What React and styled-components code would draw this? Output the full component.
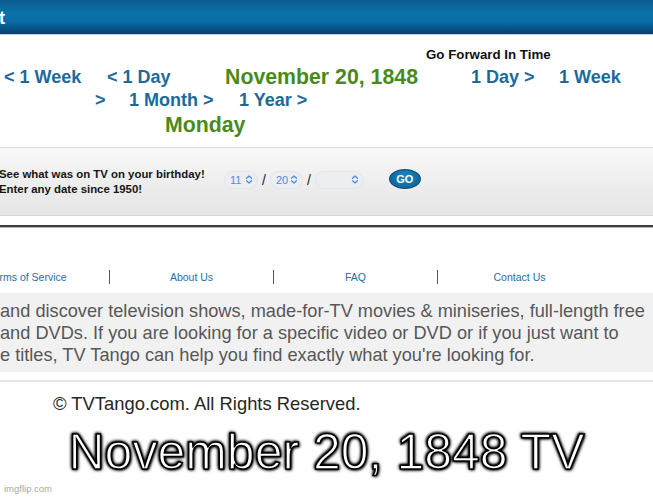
import styled, { createGlobalStyle } from "styled-components";

const GlobalStyle = createGlobalStyle`
  html, body {
    margin: 0;
    padding: 0;
    background: #fff;
    overflow: hidden;
  }
  body {
    font-family: "Liberation Sans", Arial, sans-serif;
  }
`;

const Page = styled.div`
  width: 653px;
  height: 499px;
  overflow: hidden;
  display: flex;
  flex-direction: column;
`;

const Header = styled.div`
  height: 34px;
  border-bottom: 1px solid #c9d3dc;
  background: linear-gradient(
    to bottom,
    #0a5b90 0%,
    #0b73ab 40%,
    #0a6ba3 65%,
    #053f6d 100%
  );
  display: flex;
  align-items: center;
`;

const HeaderTitle = styled.span`
  color: #fff;
  font-weight: bold;
  font-size: 18px;
  margin-left: -1px;
  margin-top: 2px;
`;

const TimeNav = styled.div`
  display: flex;
  flex-direction: column;
  padding-top: 12px;
  padding-bottom: 11px;
  border-bottom: 1px solid #dcdcdc;
`;

const ForwardLabel = styled.div`
  padding-left: 426px;
  font-size: 13.3px;
  line-height: 16px;
  font-weight: bold;
  color: #111;
`;

const NavRow = styled.div`
  display: grid;
  grid-template-columns: ${(p) => p.$cols || "auto"};
  padding-left: ${(p) => p.$pad}px;
  margin-top: ${(p) => p.$top}px;
  line-height: 22px;
  white-space: nowrap;
`;

const NavLink = styled.span`
  font-weight: bold;
  font-size: 18px;
  color: #1c6a9b;
`;

const DateText = styled.span`
  font-weight: bold;
  font-size: 21.3px;
  color: #4a8a1b;
`;

const BirthdayBar = styled.div`
  height: 68px;
  border-bottom: 1px solid #d5d5d5;
  background: linear-gradient(to bottom, #f9f9f9 0%, #ececec 60%, #e5e5e5 100%);
  display: flex;
  align-items: center;
  padding-bottom: 4px;
  box-sizing: border-box;
`;

const Prompt = styled.div`
  margin-left: -1px;
  margin-top: 4px;
  width: 225px;
  font-size: 11.4px;
  line-height: 15px;
  font-weight: bold;
  color: #151515;
`;

const DateFields = styled.div`
  display: flex;
  align-items: center;
  gap: 4px;
`;

const Pill = styled.div`
  width: ${(p) => p.$w}px;
  height: 18px;
  box-sizing: border-box;
  border-radius: 9px;
  background: #eceef2;
  border: 1px solid #e2e5ea;
  display: flex;
  align-items: center;
  justify-content: space-between;
  padding: 0 4px 0 5px;
  font-size: 11px;
  color: #4a8ed9;
`;

const Slash = styled.span`
  font-size: 14px;
  color: #222;
`;

const GoButton = styled.button`
  margin-left: 25px;
  width: 32px;
  height: 20px;
  border-radius: 50%;
  border: 1px solid #0a4e78;
  background: radial-gradient(ellipse at 50% 35%, #1a86c0 0%, #0c6aa2 70%, #0a5a8a 100%);
  color: #fff;
  font-family: "Liberation Sans", Arial, sans-serif;
  font-weight: bold;
  font-size: 11px;
  padding: 0;
  margin-top: -2px;
`;

const HeavyRule = styled.div`
  margin-top: 9px;
  height: 2px;
  background: #3c3c3c;
  border-bottom: 1px solid #b8b8b8;
`;

const LinksRow = styled.div`
  display: flex;
  align-items: center;
  margin-left: -54px;
  margin-top: 42px;
  height: 14px;
`;

const FooterLink = styled.span`
  width: 163px;
  text-align: center;
  font-size: 10.5px;
  color: #2470a6;
  white-space: nowrap;
`;

const Sep = styled.span`
  width: 1px;
  height: 14px;
  background: #555;
`;

const About = styled.div`
  margin-top: 9px;
  background: #f1f1f1;
  padding: 7px 0 6px;
  font-size: 18.2px;
  line-height: 22px;
  color: #575757;
  white-space: nowrap;
`;

const ThinRule = styled.div`
  margin-top: 8px;
  height: 2px;
  background: #e4e4e4;
`;

const Copyright = styled.div`
  margin-top: 11px;
  padding-left: 53px;
  font-size: 18.4px;
  line-height: 22px;
  color: #262626;
`;

const Caption = styled.div`
  margin-top: 12px;
  text-align: center;
  font-size: 50px;
  line-height: 50px;
  color: #fff;
  white-space: nowrap;
  -webkit-text-stroke: 1.5px #000;
  text-shadow: 0 0 3px #000, 0 0 4px #000, 1px 1px 3px #000, -1px -1px 3px #000;
`;

const Watermark = styled.div`
  margin-top: 6px;
  padding-left: 4px;
  font-size: 9.5px;
  line-height: 12px;
  color: #a8a8a8;
`;

const UpDown = () => (
  <svg width="8" height="9" viewBox="0 0 8 9" fill="none" stroke="#4a8ed9" strokeWidth="1.3" strokeLinecap="round" strokeLinejoin="round">
    <path d="M1.5 3.2 L4 1 L6.5 3.2" />
    <path d="M1.5 5.8 L4 8 L6.5 5.8" />
  </svg>
);

export default function App() {
  return (
    <Page>
      <GlobalStyle />
      <Header>
        <HeaderTitle>t</HeaderTitle>
      </Header>

      <TimeNav>
        <ForwardLabel>Go Forward In Time</ForwardLabel>
        <NavRow $pad={4} $top={3} $cols="103px 118px 246px 88px auto">
          <NavLink>&lt; 1 Week</NavLink>
          <NavLink>&lt; 1 Day</NavLink>
          <DateText>November 20, 1848</DateText>
          <NavLink>1 Day &gt;</NavLink>
          <NavLink>1 Week</NavLink>
        </NavRow>
        <NavRow $pad={95} $top={1} $cols="34px 110px auto">
          <NavLink>&gt;</NavLink>
          <NavLink>1 Month &gt;</NavLink>
          <NavLink>1 Year &gt;</NavLink>
        </NavRow>
        <NavRow $pad={165} $top={3}>
          <DateText>Monday</DateText>
        </NavRow>
      </TimeNav>

      <BirthdayBar>
        <Prompt>
          See what was on TV on your birthday!
          <br />
          Enter any date since 1950!
        </Prompt>
        <DateFields>
          <Pill $w={34}>
            <span>11</span>
            <UpDown />
          </Pill>
          <Slash>/</Slash>
          <Pill $w={33}>
            <span>20</span>
            <UpDown />
          </Pill>
          <Slash>/</Slash>
          <Pill $w={49}>
            <span />
            <UpDown />
          </Pill>
        </DateFields>
        <GoButton>GO</GoButton>
      </BirthdayBar>

      <HeavyRule />

      <LinksRow>
        <FooterLink>Terms of Service</FooterLink>
        <Sep />
        <FooterLink>About Us</FooterLink>
        <Sep />
        <FooterLink>FAQ</FooterLink>
        <Sep />
        <FooterLink>Contact Us</FooterLink>
      </LinksRow>

      <About>
        <div>and discover television shows, made-for-TV movies &amp; miniseries, full-length free</div>
        <div>and DVDs. If you are looking for a specific video or DVD or if you just want to</div>
        <div>e titles, TV Tango can help you find exactly what you're looking for.</div>
      </About>

      <ThinRule />

      <Copyright>© TVTango.com. All Rights Reserved.</Copyright>

      <Caption>November 20, 1848 TV</Caption>

      <Watermark>imgflip.com</Watermark>
    </Page>
  );
}
